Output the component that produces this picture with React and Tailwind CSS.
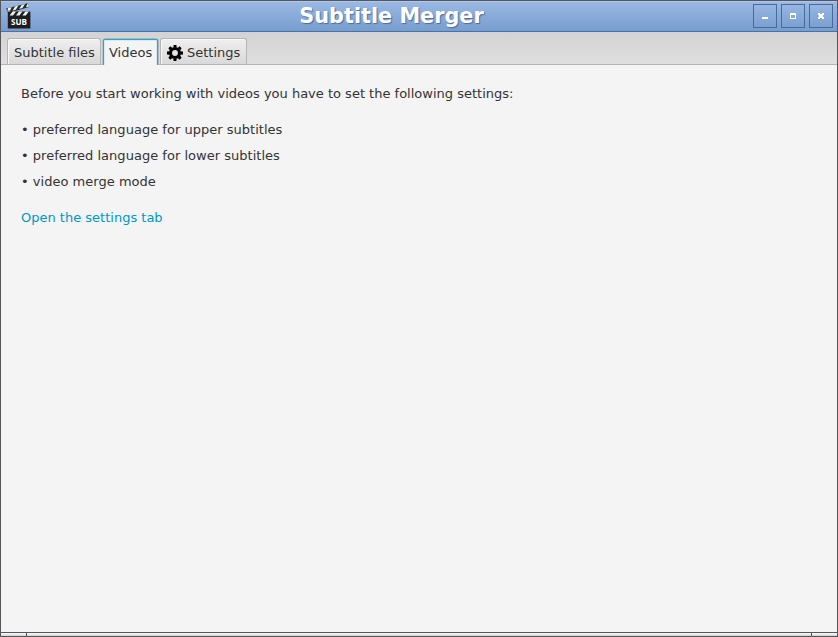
import React from 'react';

function Clapper() {
  return (
    <svg width="26" height="26" viewBox="0 0 26 26" className="shrink-0">
      <path d="M0.2 5.4 L21.8 0.2 L23.2 4 L4 9.4 L1.6 9.2 Z" fill="#2a2a2a" />
      <path d="M2.2 5 L5.6 4.2 L4.2 7.2 L1.2 7.6 Z M9 3.4 L12.4 2.6 L9.8 6.8 L6.6 7.7 Z M15.6 1.9 L19 1 L16.4 5.1 L13.2 6 Z M21.6 0.5 L23.1 3.5 L20 4.2 Z" fill="#f2f2f2" />
      <circle cx="3" cy="8.6" r="1.3" fill="#ddd" />
      <rect x="1.8" y="8.6" width="22.6" height="17" rx="0.5" fill="#1e1e20" />
      <path d="M6.6 8.6 H10 L7 12.6 H3.6 Z M13 8.6 H16.4 L13.4 12.6 H10 Z M19.4 8.6 H22.8 L19.8 12.6 H16.4 Z" fill="#f2f2f2" />
      <text x="12.9" y="22" textAnchor="middle" fontFamily="Open Sans" fontWeight="700" fontSize="8" fill="#fff">SUB</text>
    </svg>
  );
}

function Gear() {
  return (
    <svg width="16" height="16" viewBox="-8 -8 16 16" className="shrink-0">
      <circle r="4.5" fill="none" stroke="#000" strokeWidth="3.1" />
      {[0, 45, 90, 135, 180, 225, 270, 315].map((a) => (
        <path key={a} d="M-1.7 -5.4 L-1.4 -8 H1.4 L1.7 -5.4 Z" transform={`rotate(${a})`} />
      ))}
    </svg>
  );
}

function WindowButton({ children }) {
  return (
    <button className="flex h-6 w-6 items-center justify-center border border-[#456a9b] bg-linear-to-b from-[#97b6e1] to-[#7ba0d1]">
      <svg width="22" height="22" viewBox="0 0 22 22" shapeRendering="crispEdges">{children}</svg>
    </button>
  );
}

const tab = 'flex h-[26px] items-center rounded-t-[3px] border border-b-0 border-[#b5b5b5] bg-linear-to-b from-[#efefef] to-[#d9d9d9] pt-[2px] shadow-[inset_1px_1px_0_#f8f8f8]';

export default function App() {
  return (
    <div className="flex h-[637px] w-[838px] flex-col overflow-hidden border border-[#55555a] bg-[#f4f4f4] font-['DejaVu_Sans',sans-serif] text-[13px] text-[#333]">
      <header className="flex h-[31px] shrink-0 items-center border-b border-[#4a72a8] bg-linear-to-b from-[#9bb9e4] to-[#779dcf] pr-1 pl-[5px] shadow-[inset_0_1px_0_#b0c8ec]">
        <Clapper />
        <h1 className="flex-1 pr-[2px] text-center text-[20.8px] leading-[30px] font-bold text-white [text-shadow:1px_1px_1px_#4b6c98]">Subtitle Merger</h1>
        <div className="flex gap-1">
          <WindowButton><rect x="8" y="12" width="6" height="2" fill="#fff" /></WindowButton>
          <WindowButton><path d="M8 8h6v6H8zM9 10v3h4v-3z" fillRule="evenodd" fill="#fff" /></WindowButton>
          <WindowButton><path d="M8 8h2v1h2v-1h2v2h-1v2h1v2h-2v-1h-2v1h-2v-2h1v-2h-1z" fill="#fff" /></WindowButton>
        </div>
      </header>
      <nav className="flex h-[33px] shrink-0 items-end border-b border-[#b5b5b5] bg-linear-to-b from-[#d3d3d3] to-[#dfdfdf] pl-[6px]">
        <div className={`${tab} mr-[2px] w-[94px] pl-[6px]`}>Subtitle files</div>
        <div className="-mb-px flex h-[26px] w-[55px] items-center rounded-t-[2px] border border-b-0 border-[#2ba6cb] bg-[#f4f4f4] pb-px pl-[5px] shadow-[inset_1px_1px_0_#d3ebf3,inset_-1px_0_0_#d3ebf3,0_-1px_0_#a9b7bb,-1px_0_0_#b4c3c8,1px_0_0_#a9b7bb]"><span className="pt-px">Videos</span></div>
        <div className={`${tab} ml-[2px] w-[87px] gap-1 pl-[6px]`}><Gear />Settings</div>
      </nav>
      <main className="flex flex-1 flex-col pt-[21px] pl-5 leading-4">
        <p>Before you start working with videos you have to set the following settings:</p>
        <ul className="mt-5 flex flex-col gap-[10px] tracking-[0.02px]">
          <li>• preferred language for upper subtitles</li>
          <li>• preferred language for lower subtitles</li>
          <li>• video merge mode</li>
        </ul>
        <a className="mt-5 text-[#0096c9]">Open the settings tab</a>
      </main>
      <footer className="flex h-1 shrink-0 border-t border-[#55555a] bg-linear-to-b from-white to-[#cfcfcf]">
        <div className="w-[26px] border-r border-[#55555a]" />
        <div className="flex-1" />
        <div className="w-[26px] border-l border-[#55555a]" />
      </footer>
    </div>
  );
}
